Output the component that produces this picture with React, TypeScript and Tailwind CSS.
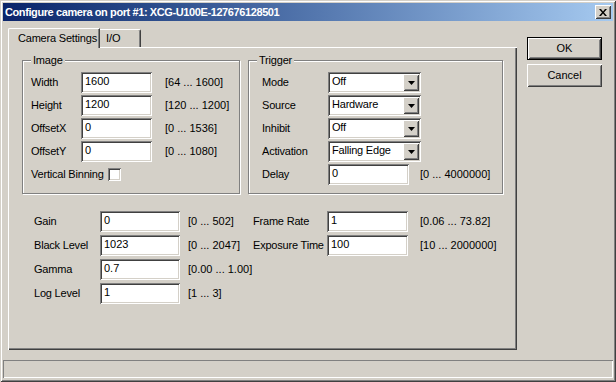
import React from "react";

const sunken =
  "bg-white shadow-[inset_1px_1px_0_#808080,inset_-1px_-1px_0_#ffffff,inset_2px_2px_0_#404040,inset_-2px_-2px_0_#d4d0c8]";
const raised =
  "bg-[#d4d0c8] shadow-[inset_1px_1px_0_#ffffff,inset_-1px_-1px_0_#404040,inset_2px_2px_0_#d4d0c8,inset_-2px_-2px_0_#808080]";
const label = "whitespace-nowrap tracking-[-0.2px] shrink-0";

function Edit({ value, w }: { value: string; w: string }) {
  return (
    <div className={`${w} h-[21px] ${sunken} pl-[4px] pt-[3px] leading-[13px] shrink-0`}>
      {value}
    </div>
  );
}

function Combo({ value }: { value: string }) {
  return (
    <div className={`w-[93px] h-[21px] ${sunken} flex items-start p-[2px] shrink-0`}>
      <div className="flex-1 pl-[2px] pt-[1px] leading-[13px] whitespace-nowrap tracking-[-0.2px]">
        {value}
      </div>
      <div className={`w-[16px] h-[17px] ${raised} flex items-center justify-center`}>
        <svg width="7" height="4" viewBox="0 0 7 4">
          <path d="M0 0h7L3.5 4z" fill="#000" />
        </svg>
      </div>
    </div>
  );
}

function Group({
  title,
  className,
  children,
}: {
  title: string;
  className: string;
  children: React.ReactNode;
}) {
  return (
    <div
      className={`${className} border border-[#808080] shadow-[inset_1px_1px_0_#ffffff,1px_1px_0_#ffffff]`}
    >
      <div className="-mt-[8px] ml-[8px] px-[2px] w-fit bg-[#d4d0c8] leading-[14px] tracking-[-0.2px]">
        {title}
      </div>
      {children}
    </div>
  );
}

const imageRows = [
  { label: "Width", value: "1600", range: "[64 ... 1600]" },
  { label: "Height", value: "1200", range: "[120 ... 1200]" },
  { label: "OffsetX", value: "0", range: "[0 ... 1536]" },
  { label: "OffsetY", value: "0", range: "[0 ... 1080]" },
];

const triggerRows = [
  { label: "Mode", value: "Off" },
  { label: "Source", value: "Hardware" },
  { label: "Inhibit", value: "Off" },
  { label: "Activation", value: "Falling Edge" },
];

const leftRows = [
  { label: "Gain", value: "0", range: "[0 ... 502]" },
  { label: "Black Level", value: "1023", range: "[0 ... 2047]" },
  { label: "Gamma", value: "0.7", range: "[0.00 ... 1.00]" },
  { label: "Log Level", value: "1", range: "[1 ... 3]" },
];

const rightRows = [
  { label: "Frame Rate", value: "1", range: "[0.06 ... 73.82]" },
  { label: "Exposure Time", value: "100", range: "[10 ... 2000000]" },
];

export default function App() {
  return (
    <div className="w-[616px] h-[382px] bg-[#d4d0c8] font-['Liberation_Sans',Arial,sans-serif] text-[11px] text-black shadow-[inset_1px_1px_0_#d4d0c8,inset_-1px_-1px_0_#404040,inset_2px_2px_0_#ffffff,inset_-2px_-2px_0_#808080] p-[3px] flex flex-col overflow-hidden">
      {/* title bar */}
      <div className="h-[18px] bg-linear-to-r from-[#0a246a] to-[#a6caf0] flex items-center pl-[2px] pr-[2px]">
        <span className="flex-1 text-white font-bold text-[11px] tracking-[-0.4px] whitespace-nowrap">
          Configure camera on port #1: XCG-U100E-127676128501
        </span>
        <div className={`w-[16px] h-[14px] ${raised} flex items-center justify-center`}>
          <svg width="8" height="7" viewBox="0 0 8 7">
            <path d="M0 0h2l2 2.5L6 0h2L5 3.5 8 7H6L4 4.5 2 7H0l3-3.5z" fill="#000" />
          </svg>
        </div>
      </div>

      {/* body */}
      <div className="flex mt-[7px] ml-[5px]">
        <div className="w-[509px] flex flex-col">
          {/* tabs */}
          <div className="flex items-end h-[20px] relative z-10">
            <div className="h-[20px] w-[92px] bg-[#d4d0c8] border-t border-l border-white shadow-[inset_-1px_0_0_#808080] border-r border-r-[#404040] rounded-tl-[2px] pl-[9px] pt-[3px] leading-[13px] whitespace-nowrap tracking-[-0.2px]">
              Camera Settings
            </div>
            <div className="h-[18px] w-[41px] border-t border-white border-r border-r-[#404040] shadow-[inset_-1px_0_0_#808080] rounded-tr-[2px] pl-[6px] pt-[2px] leading-[13px] mb-[1px]">
              I/O
            </div>
          </div>
          <div className="h-[303px] -mt-[1px] bg-[#d4d0c8] shadow-[inset_1px_1px_0_#ffffff,inset_-1px_-1px_0_#404040,inset_-2px_-2px_0_#808080] pl-[14px] pt-[13px]">
            <div className="flex gap-[8px]">
              <Group title="Image" className="w-[218px] h-[134px]">
                <div className="flex flex-col gap-[2px] mt-[5px] pl-[8px]">
                  {imageRows.map((r) => (
                    <div key={r.label} className="flex items-center h-[21px]">
                      <span className={`w-[50px] ${label}`}>{r.label}</span>
                      <Edit value={r.value} w="w-[71px]" />
                      <span className="ml-[13px] whitespace-nowrap">{r.range}</span>
                    </div>
                  ))}
                  <div className="flex items-center h-[21px]">
                    <span className={label}>Vertical Binning</span>
                    <div className={`w-[13px] h-[13px] ml-[4px] ${sunken}`} />
                  </div>
                </div>
              </Group>
              <Group title="Trigger" className="w-[255px] h-[134px]">
                <div className="flex flex-col gap-[2px] mt-[5px] pl-[13px]">
                  {triggerRows.map((r) => (
                    <div key={r.label} className="flex items-center h-[21px]">
                      <span className={`w-[66px] ${label}`}>{r.label}</span>
                      <Combo value={r.value} />
                    </div>
                  ))}
                  <div className="flex items-center h-[21px]">
                    <span className={`w-[66px] ${label}`}>Delay</span>
                    <Edit value="0" w="w-[81px]" />
                    <span className="ml-[11px] whitespace-nowrap">[0 ... 4000000]</span>
                  </div>
                </div>
              </Group>
            </div>

            <div className="flex mt-[17px] ml-[12px]">
              <div className="flex flex-col gap-[3px] w-[219px]">
                {leftRows.map((r) => (
                  <div key={r.label} className="flex items-center h-[21px]">
                    <span className={`w-[66px] ${label}`}>{r.label}</span>
                    <Edit value={r.value} w="w-[80px]" />
                    <span className="ml-[8px] whitespace-nowrap">{r.range}</span>
                  </div>
                ))}
              </div>
              <div className="flex flex-col gap-[3px]">
                {rightRows.map((r) => (
                  <div key={r.label} className="flex items-center h-[21px]">
                    <span className={`w-[74px] ${label}`}>{r.label}</span>
                    <Edit value={r.value} w="w-[81px]" />
                    <span className="ml-[12px] whitespace-nowrap">{r.range}</span>
                  </div>
                ))}
              </div>
            </div>
          </div>
        </div>

        {/* buttons */}
        <div className="ml-[10px] mt-[9px] flex flex-col gap-[4px]">
          <div className="w-[75px] h-[23px] border border-black">
            <div className={`w-full h-full ${raised} flex items-center justify-center`}>OK</div>
          </div>
          <div className={`w-[75px] h-[23px] ${raised} flex items-center justify-center`}>
            Cancel
          </div>
        </div>
      </div>

      {/* status bar */}
      <div className="mt-[10px] h-[18px] shadow-[inset_1px_1px_0_#808080,inset_-1px_-1px_0_#ffffff]" />
    </div>
  );
}
